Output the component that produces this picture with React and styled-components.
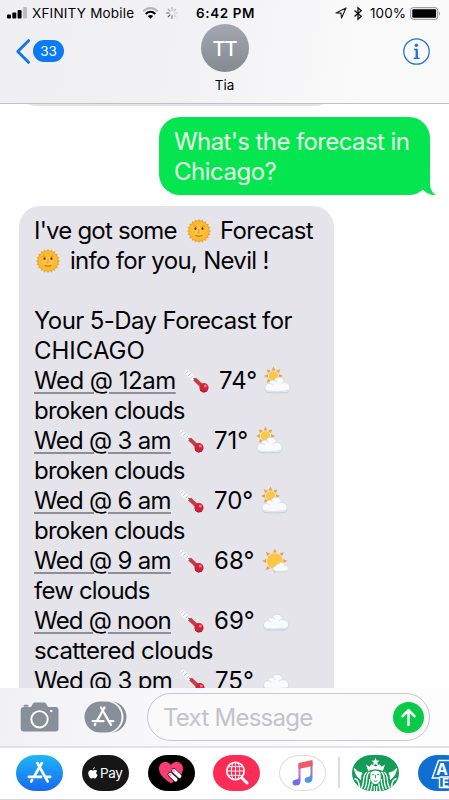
import React from "react";
import styled, { createGlobalStyle } from "styled-components";

const GlobalStyle = createGlobalStyle`
  * { box-sizing: border-box; }
  html, body { margin: 0; padding: 0; overflow: hidden; background: #fff; }
  svg { display: block; flex: none; overflow: visible; }
`;

const Phone = styled.main`
  width: 449px;
  height: 800px;
  display: flex;
  flex-direction: column;
  overflow: hidden;
  background: #fff;
  color: #050507;
  font-family: Inter, "Liberation Sans", sans-serif;
`;

const TopArea = styled.header`
  height: 104px;
  flex: none;
  background: linear-gradient(100deg, #efeff2 0%, #f2f2f5 45%, #f9f9fa 75%, #fafafa 100%);
  border-bottom: 1px solid #c0c0c6;
`;

const StatusBar = styled.div`
  height: 24px;
  display: flex;
  align-items: center;
  padding: 2px 7px 0 7px;
`;

const StatusText = styled.span`
  width: ${(p) => p.$w}px;
  margin-left: ${(p) => p.$ml}px;
  flex: none;
  font-size: 13.5px;
  line-height: 16px;
  white-space: nowrap;
  font-weight: ${(p) => (p.$bold ? 600 : 400)};
  letter-spacing: ${(p) => p.$ls || 0}px;
`;

const StatusIcon = styled.span`
  flex: none;
  margin-left: ${(p) => p.$ml}px;
`;

const NavBar = styled.div`
  height: 79px;
  display: grid;
  grid-template-columns: 1fr 60px 1fr;
  padding: 0 19px 0 16px;
`;

const Back = styled.div`
  display: flex;
  align-items: center;
  gap: 3px;
  height: 54px;
`;

const Badge = styled.span`
  width: 31px;
  height: 22px;
  border-radius: 11px;
  background: #0a7bf5;
  color: #fff;
  font-size: 13.5px;
  line-height: 22px;
  text-align: center;
`;

const Contact = styled.div`
  display: flex;
  flex-direction: column;
  align-items: center;
  margin-left: 3px;
`;

const Avatar = styled.div`
  width: 48px;
  height: 48px;
  border-radius: 50%;
  background: linear-gradient(#a3a7b1, #858992);
  color: #fff;
  font-size: 20px;
  font-weight: 500;
  line-height: 50px;
  letter-spacing: -1px;
  text-align: center;
`;

const ContactName = styled.span`
  margin-top: 5px;
  font-size: 13.5px;
  line-height: 16px;
`;

const Info = styled.div`
  display: flex;
  justify-content: flex-end;
  padding-top: 14px;
`;

const Thread = styled.section`
  height: 584px;
  flex: none;
  overflow: hidden;
  display: flex;
  flex-direction: column;
`;

const EarlierBubble = styled.div`
  width: 315px;
  height: 36px;
  flex: none;
  margin: -34px 0 0 18px;
  border-radius: 20px;
  background: #e4e3ea;
`;

const SentBubble = styled.div`
  position: relative;
  align-self: flex-end;
  flex: none;
  width: 271px;
  height: 78px;
  margin: 11px 19px 11px 0;
  padding: 10px 0 0 15px;
  border-radius: 21px;
  background: #04e54f;
  color: #e9ffe9;
`;

const Tail = styled.svg`
  position: absolute;
  right: -6px;
  bottom: 0;
`;

const ReceivedBubble = styled.div`
  flex: none;
  width: 315px;
  height: 600px;
  margin-left: 19px;
  padding: 10px 0 0 15px;
  border-radius: 21px;
  background: #e5e4eb;
`;

const Line = styled.div`
  height: 30px;
  display: flex;
  align-items: center;
  font-size: 24px;
  line-height: 30px;
  white-space: pre;
`;

const Words = styled.span`
  flex: none;
  width: ${(p) => (p.$w ? p.$w + "px" : "auto")};
  letter-spacing: ${(p) => p.$ls || 0}px;
`;

const TimeLink = styled(Words)`
  text-decoration: underline;
  text-decoration-color: #8f8e96;
  text-decoration-thickness: 1.5px;
  text-underline-offset: 3px;
`;

const Emoji = styled.span`
  flex: none;
  margin: -1px ${(p) => p.$mr || 0}px 0 ${(p) => p.$ml || 0}px;
`;

const Composer = styled.section`
  height: 60px;
  flex: none;
  display: flex;
  align-items: center;
  padding: 0 19px 0 20px;
  background: linear-gradient(100deg, #f1f1f4 0%, #f8f8fa 35%, #fdfdfd 100%);
  border-bottom: 2px solid #e2e2e6;
`;

const ComposerIcon = styled.span`
  width: ${(p) => p.$w}px;
  margin-right: ${(p) => p.$mr}px;
`;

const InputField = styled.div`
  width: 283px;
  height: 48px;
  display: flex;
  align-items: center;
  justify-content: space-between;
  padding: 1px 5px 0 15px;
  border: 1.5px solid #c8c8cd;
  border-radius: 24px;
  background: #fafafb;
  color: #c3c3c8;
  font-size: 24px;
`;

const SendButton = styled.span`
  width: 31px;
  height: 31px;
  border-radius: 50%;
  background: #09cb48;
`;

const AppDrawer = styled.nav`
  height: 52px;
  flex: none;
  display: flex;
  align-items: center;
  gap: 18.8px;
  padding: 0 0 2px 16px;
  border-bottom: 1px solid #d5d5d9;
  background: #fff;
`;

const AppPill = styled.span`
  width: 47px;
  height: 36px;
  flex: none;
  display: flex;
  align-items: center;
  justify-content: center;
  overflow: hidden;
  border-radius: 20px / 18px;
  background: ${(p) => p.$bg};
  border: ${(p) => (p.$outlined ? "1px solid #dedee2" : "0")};
  color: #fff;
`;

const PayText = styled.span`
  margin-left: 2px;
  font-size: 13.5px;
  line-height: 16px;
  letter-spacing: -0.3px;
`;

const Divider = styled.span`
  width: 2px;
  height: 31px;
  flex: none;
  margin: 0 -7px 0 -7px;
  background: #dcdce0;
`;

const SunFace = () => (
  <svg width="26" height="26" viewBox="0 0 26 26">
    <defs>
      <radialGradient id="face">
        <stop offset="0" stopColor="#ffc94c" />
        <stop offset="1" stopColor="#f9b52c" />
      </radialGradient>
    </defs>
    {Array.from({ length: 20 }, (_, i) => (
      <path key={i} d="M11.4 3.5 L13 .7 L14.6 3.5Z" fill="#efa92b" transform={`rotate(${i * 18} 13 13)`} />
    ))}
    <circle cx="13" cy="13" r="10.3" fill="url(#face)" stroke="#eda226" strokeWidth=".7" />
    <ellipse cx="9.5" cy="10.7" rx="1.1" ry="1.4" fill="#65410f" />
    <ellipse cx="16.5" cy="10.7" rx="1.1" ry="1.4" fill="#65410f" />
    <path d="M7.5 8.5q2-1.2 3.2 0M15.3 8.5q2-1.2 3.2 0M13 11v3.8h-1.3" fill="none" stroke="#d38a20" strokeWidth=".8" />
    <path d="M9.5 17.500q3.500 1.500 7 0" fill="none" stroke="#b96d1b" strokeWidth="1.100" />
  </svg>
);

const Thermometer = () => (
  <svg width="26" height="26" viewBox="0 0 26 26">
    <path d="M3 4.500 L14 14.500" stroke="#fafafa" strokeWidth="4.600" strokeLinecap="round" />
    <path d="M1.500 5.700l2.600-2.700M4 8l2.600-2.700M6.500 10.300l2.600-2.700" stroke="#a9bdc5" strokeWidth=".9" />
    <path d="M10.500 11 L19 19" stroke="#d43945" strokeWidth="4" />
    <path d="M9.500 10 L17 16.800" stroke="#a64750" strokeWidth="1.200" />
    <circle cx="20" cy="19.700" r="4.600" fill="#cf2338" />
    <circle cx="21.300" cy="18" r="1.500" fill="#ee7782" />
    <path d="M16 22q3 3.600 6.800 1.300" fill="none" stroke="#9c1c2c" strokeWidth="1" />
  </svg>
);

const cloudPath =
  "M6.5 22.3 C2.8 22.3 1 20.2 1 17.7 C1 15.3 2.9 13.6 5 13.5 C5.4 10.9 7.7 9.7 9.9 10.3 C11 7.9 13 7 15.3 7.2 C18.5 7.5 20.3 9.8 20.4 12.5 C23.9 12.3 26 14.5 26 17.4 C26 20.4 24 22.3 20.8 22.3Z";

const CloudShape = ({ transform }) => (
  <g transform={transform}>
    <path d={cloudPath} fill="#c3cad6" transform="translate(0 1)" />
    <path d={cloudPath} fill="#f8fafb" stroke="#ccd2db" strokeWidth=".6" />
    <path d="M5 13.5q3-.2 4 2M9.9 10.3q2.2.4 2.8 2.2M20.4 12.5q-2.5-.3-3.7 1.3" fill="none" stroke="#d3d9e0" strokeWidth=".8" />
    <path d="M3 20.5q3 1.2 10 1.1t11-1.2" fill="none" stroke="#dfe4ea" strokeWidth="1.2" />
  </g>
);

const SunRays = ({ cx, cy, r }) => (
  <g>
    {Array.from({ length: 8 }, (_, i) => (
      <path
        key={i}
        d={`M${cx - 2} ${cy - r - 0.8} L${cx} ${cy - r - 4.8} L${cx + 2} ${cy - r - 0.8}Z`}
        fill="#e6a83c"
        transform={`rotate(${i * 45} ${cx} ${cy})`}
      />
    ))}
    <circle cx={cx} cy={cy} r={r} fill="#fbc641" />
  </g>
);

const Weather = ({ kind }) => (
  <svg width="27" height="26" viewBox="0 0 27 26">
    {kind === "broken" && <SunRays cx={9.5} cy={8} r={4.7} />}
    {kind === "few" && <SunRays cx={12.8} cy={13} r={7.8} />}
    {kind === "few" ? (
      <CloudShape transform="translate(10.5 10.2) scale(.6)" />
    ) : (
      <CloudShape transform={kind === "cloud" ? "translate(.5 -.8)" : "translate(0 2)"} />
    )}
  </svg>
);

const AppStoreGlyph = ({ size, color, width = 2.6 }) => (
  <svg width={size} height={size} viewBox="0 0 24 24" fill="none" stroke={color} strokeWidth={width} strokeLinecap="round">
    <path d="M14.2 3 L7.2 15.3 M4.8 19.3 L4.1 20.6 M10 3 L19.8 20.6 M1.8 16.2 H13.5 M18 16.2 H22.2" />
  </svg>
);

const forecast = [
  { time: "Wed @ 12am", w: 142, ls: -0.5, temp: "74°", tempW: 37, kind: "broken", note: "broken clouds", noteLs: -0.77 },
  { time: "Wed @ 3 am", w: 137, ls: -0.7, temp: "71°", tempW: 34, kind: "broken", note: "broken clouds", noteLs: -0.77 },
  { time: "Wed @ 6 am", w: 137, ls: -0.7, temp: "70°", tempW: 39, kind: "broken", note: "broken clouds", noteLs: -0.77 },
  { time: "Wed @ 9 am", w: 137, ls: -0.7, temp: "68°", tempW: 40, kind: "few", note: "few clouds", noteLs: -0.8 },
  { time: "Wed @ noon", w: 137, ls: -0.8, temp: "69°", tempW: 40, kind: "cloud", note: "scattered clouds", noteLs: -0.6 },
  { time: "Wed @ 3 pm", w: 138, ls: -0.7, temp: "75°", tempW: 39, kind: "cloud", note: "" },
];

const Signal = () => (
  <svg width="20" height="12" viewBox="0 0 20 12">
    <rect x="0" y="7.5" width="4" height="4" rx="1" fill="#000" />
    <rect x="5.3" y="5.5" width="4" height="6" rx="1" fill="#000" />
    <rect x="10.6" y="3" width="4" height="8.5" rx="1" fill="#000" />
    <rect x="16" y="0" width="4" height="11.5" rx="1" fill="#bdbdc1" />
  </svg>
);

const Wifi = () => (
  <svg width="17" height="12" viewBox="0 0 17 12" fill="none">
    <path d="M1.2 4.2 Q8.5 -2.2 15.8 4.2" stroke="#b2b2b6" strokeWidth="2" />
    <path d="M3.7 6.9 Q8.5 2.7 13.3 6.9" stroke="#000" strokeWidth="2" />
    <path d="M5.8 9 Q8.5 6.8 11.2 9 L8.5 11.8Z" fill="#000" />
  </svg>
);

const Spinner = () => (
  <svg width="12" height="12" viewBox="0 0 12 12" strokeWidth="1.1" strokeLinecap="round">
    {["#aaa", "#bbb", "#ccc", "#ccc", "#777", "#555", "#666", "#999"].map((c, i) => (
      <path key={i} d="M6 .5V3.2" stroke={c} transform={`rotate(${i * 45} 6 6)`} />
    ))}
  </svg>
);

const Siren = () => (
  <svg width="47" height="36" viewBox="0 0 47 36" fill="none" stroke="#fff">
    <path d="M23.500 2.800l1.100 2.700 2.900.2-2.200 1.900.7 2.800-2.500-1.500-2.500 1.500.7-2.800-2.200-1.900 2.900-.2Z" fill="#fff" stroke="none" />
    <path d="M14 9.500l3.300 2.300 2.300-2.600 3.900 2.200 3.900-2.200 2.300 2.600L33 9.500l-2.200 6.500q-7.300-3.400-14.600 0Z" fill="#fff" stroke="none" />
    <path d="M18.500 17.500Q23.500 13.500 28.500 17.500L28.800 23Q27.500 29 23.500 29T18.200 23Z" fill="#fff" stroke="none" />
    <path d="M17.500 17C12.500 21 17 26 12.500 34M15 17C9.500 21 13.500 26 9.500 33M29.500 17C34.500 21 30 26 34.500 34M32 17C37.500 21 33.500 26 37.500 33M17.800 24C18 28 16.500 31 15.500 35M29.200 24C29 28 30.500 31 31.500 35M20 28.500C20.500 31 19 33 18.700 36M27 28.500C26.500 31 28 33 28.300 36M22.300 31V36M24.700 31V36" strokeWidth="1.300" />
    <path d="M2.500 13.500q3 4 7.500 4.500-2 2.500-1.300 6.500-5.400-4-6.200-11M44.500 13.500q-3 4-7.500 4.500 2 2.500 1.300 6.500 5.400-4 6.200-11" fill="#fff" strokeWidth="1" />
    <path d="M2.500 23.500q4.500 1 5 8.500M44.500 23.500q-4.500 1-5 8.500" strokeWidth="1.500" />
    <path d="M20 19.700h2.300M24.800 19.700h2.300M23.500 20v3.300M21.700 25.700q1.800 1.200 3.600 0" stroke="#159d58" strokeWidth=".9" />
  </svg>
);

const StackedLetters = styled.text`
  font-family: Inter, "Liberation Sans", sans-serif;
  font-size: ${(p) => p.$size}px;
  font-weight: 700;
`;

export default function App() {
  return (
    <Phone>
      <GlobalStyle />
      <TopArea>
        <StatusBar>
          <Signal />
          <StatusText $w={103} $ml={5} $ls={0.2}>XFINITY Mobile</StatusText>
          <StatusIcon $ml={7}><Wifi /></StatusIcon>
          <StatusIcon $ml={7}><Spinner /></StatusIcon>
          <StatusText $w={60} $ml={18} $ls={0.6} $bold>6:42 PM</StatusText>
          <StatusIcon $ml={79}>
            <svg width="12" height="12" viewBox="0 0 12 12" fill="none" stroke="#222" strokeWidth="1.2" strokeLinejoin="round">
              <path d="M1 6 L11 1 L6.500 11 L6 6.200Z" />
            </svg>
          </StatusIcon>
          <StatusIcon $ml={7}>
            <svg width="8" height="13" viewBox="0 0 8 13" fill="none" stroke="#111" strokeWidth="1.3">
              <path d="M.5 3.500 L7.200 9.300 L4 12.300 V.7 L7.200 3.700 L.5 9.500" />
            </svg>
          </StatusIcon>
          <StatusText $w={37} $ml={8} $ls={0.1}>100%</StatusText>
          <StatusIcon $ml={3}>
            <svg width="31" height="13" viewBox="0 0 31 13">
              <rect x=".7" y=".7" width="27" height="11.600" rx="2.500" fill="none" stroke="#8b8b8e" strokeWidth="1" />
              <rect x="2.300" y="2.300" width="23.800" height="8.400" rx="1" fill="#000" />
              <path d="M29 4.500q2 2 0 4Z" fill="#8b8b8e" />
            </svg>
          </StatusIcon>
        </StatusBar>
        <NavBar>
          <Back>
            <svg width="14" height="25" viewBox="0 0 14 25" fill="none" stroke="#1577e6" strokeWidth="3" strokeLinecap="round" strokeLinejoin="round">
              <path d="M12.500 1.700 L1.800 12.500 L12.500 23.300" />
            </svg>
            <Badge>33</Badge>
          </Back>
          <Contact>
            <Avatar>TT</Avatar>
            <ContactName>Tia</ContactName>
          </Contact>
          <Info>
            <svg width="27" height="27" viewBox="0 0 27 27">
              <circle cx="13.500" cy="13.500" r="12.700" fill="none" stroke="#2273dc" strokeWidth="1.300" />
              <circle cx="13.400" cy="7.300" r="1.700" fill="#2273dc" />
              <path d="M11 11.400h3.100v8.600M10.700 20.300h5.800" fill="none" stroke="#2273dc" strokeWidth="1.500" />
              <path d="M13.600 11.400v8.800" stroke="#2273dc" strokeWidth="2.100" />
            </svg>
          </Info>
        </NavBar>
      </TopArea>

      <Thread>
        <EarlierBubble />
        <SentBubble>
          <Line><Words $ls={-0.6}>What's the forecast in</Words></Line>
          <Line><Words $ls={-0.5}>Chicago?</Words></Line>
          <Tail width="20" height="20" viewBox="0 0 20 20">
            <path d="M14 0V9C14 14 16.500 18 20 19.800C15.500 20.300 11.500 18.800 8.500 16L0 10Z" fill="#04e54f" />
          </Tail>
        </SentBubble>
        <ReceivedBubble>
          <Line>
            <Words $w={142} $ls={-0.8}>I've got some</Words>
            <Emoji $ml={10} $mr={8}><SunFace /></Emoji>
            <Words $ls={-0.65}>Forecast</Words>
          </Line>
          <Line>
            <Emoji $ml={1} $mr={9}><SunFace /></Emoji>
            <Words $ls={-0.7}>info for you, Nevil !</Words>
          </Line>
          <Line />
          <Line><Words $ls={-0.6}>Your 5-Day Forecast for</Words></Line>
          <Line><Words>CHICAGO</Words></Line>
          {forecast.map((f) => (
            <React.Fragment key={f.time}>
              <Line>
                <TimeLink $w={f.w} $ls={f.ls}>{f.time}</TimeLink>
                <Emoji $ml={8} $mr={9}><Thermometer /></Emoji>
                <Words $w={f.tempW}>{f.temp}</Words>
                <Emoji $ml={8}><Weather kind={f.kind} /></Emoji>
              </Line>
              {f.note && <Line><Words $ls={f.noteLs}>{f.note}</Words></Line>}
            </React.Fragment>
          ))}
        </ReceivedBubble>
      </Thread>

      <Composer>
        <ComposerIcon $w={39} $mr={25}>
          <svg width="39" height="30" viewBox="0 0 39 30">
            <path d="M4 5H11L13 1.500Q13.800.5 15 .5H24Q25.300.5 26 1.500L28 5H35.500Q38.500 5 38.500 8V26.500Q38.500 29.500 35.500 29.500H3.700Q.7 29.500.7 26.500V8Q.7 5 4 5Z" fill="#878f99" />
            <rect x="3.500" y="2.700" width="5" height="2" rx="1" fill="#878f99" />
            <circle cx="19.500" cy="17.300" r="8.200" fill="none" stroke="#fff" strokeWidth="1.900" />
            <circle cx="31.200" cy="9" r="1.200" fill="#fff" />
          </svg>
        </ComposerIcon>
        <ComposerIcon $w={43} $mr={20}>
          <svg width="43" height="32" viewBox="0 0 43 32">
            <rect x="6" y=".5" width="36.500" height="31" rx="15.500" fill="#878f99" />
            <rect x="0" y="-.5" width="39.500" height="33" rx="16.500" fill="#fafafc" />
            <rect x=".5" y=".5" width="37" height="31" rx="15.500" fill="#878f99" />
            <g fill="none" stroke="#fff" strokeWidth="2.300" strokeLinecap="round">
              <path d="M20.500 6.500L13.500 19M11.300 23L10.800 24M17 6.500L27 24M8.800 20.200H19.500M24.700 20.200H29.300" />
            </g>
          </svg>
        </ComposerIcon>
        <InputField>
          <Words $ls={-0.75}>Text Message</Words>
          <SendButton>
            <svg width="31" height="31" viewBox="0 0 31 31" fill="none" stroke="#fff" strokeWidth="2.500" strokeLinecap="round" strokeLinejoin="round">
              <path d="M15.500 23V8.500M9.500 14.200L15.500 8.200L21.500 14.200" />
            </svg>
          </SendButton>
        </InputField>
      </Composer>

      <AppDrawer>
        <AppPill $bg="linear-gradient(#1fb6f8, #1769ee)"><AppStoreGlyph size={25} color="#fff" /></AppPill>
        <AppPill $bg="#161616">
          <svg width="10" height="12" viewBox="0 0 10 12" fill="#fff">
            <path d="M6.900 0Q7 1.800 5 2.700Q4.900.8 6.900 0ZM5 3.400Q8 2.200 9.300 4Q6.800 6 9.600 8Q8.300 11.700 6.500 11.400Q5 10.800 3.700 11.400Q1.800 11.800.6 8.300Q-.6 4.500 2 3.200Q3.400 2.700 5 3.400Z" />
          </svg>
          <PayText>Pay</PayText>
        </AppPill>
        <AppPill $bg="#000">
          <svg width="26" height="24" viewBox="0 0 26 24">
            <path d="M13 22.500C9 19.500 1 14.500 1 7.700C1 .5 9.500-1 13 4C16.500-1 25 .5 25 7.700C25 14.500 17 19.500 13 22.500Z" fill="#fa3d75" />
            <path d="M12.200 13.500l5.500 5.200M15.800 9.700l5.800 5.500" stroke="#1b0710" strokeWidth="5" strokeLinecap="round" />
            <path d="M12.200 13.500l5.500 5.200M15.800 9.700l5.800 5.500" stroke="#fff" strokeWidth="3.700" strokeLinecap="round" />
            <path d="M11 12.600l2 1.900M14.700 8.800l2 1.900" stroke="#fa9cb9" strokeWidth="2" />
          </svg>
        </AppPill>
        <AppPill $bg="#fb2d55">
          <svg width="24" height="24" viewBox="0 0 24 24" fill="none" stroke="#fff">
            <circle cx="10.500" cy="10" r="8.700" strokeWidth="1.700" />
            <path d="M16.800 16.800L22 22" strokeWidth="3" strokeLinecap="round" />
            <path d="M2 10h17M3.500 5.700h14M3.500 14.300h14M10.500 1.500v17M8 2Q4.500 10 8 18M13 2Q16.500 10 13 18" strokeWidth=".9" />
          </svg>
        </AppPill>
        <AppPill $bg="#fff" $outlined>
          <svg width="22" height="26" viewBox="0 0 22 26">
            <defs>
              <linearGradient id="note" x1="0" y1="0" x2="0" y2="1">
                <stop offset="0" stopColor="#f6536f" />
                <stop offset=".45" stopColor="#cb70d7" />
                <stop offset=".75" stopColor="#776cf0" />
                <stop offset="1" stopColor="#736bf3" />
              </linearGradient>
              <linearGradient id="noteRight" x1="0" y1="0" x2="0" y2="1">
                <stop offset="0" stopColor="#f45168" />
                <stop offset=".5" stopColor="#8f78d1" />
                <stop offset="1" stopColor="#35a3e8" />
              </linearGradient>
            </defs>
            <path d="M6.500 3L20.500 0V6L6.500 9Z" fill="#f05868" />
            <path d="M6.500 4H8.500V21Q8.500 25.500 4 25.500Q.5 25.500.5 22.700Q.5 20.200 4 19.600Q6.500 19.300 6.500 17.500Z" fill="url(#note)" />
            <path d="M18.500 2H20.500V18Q20.500 22.700 16 22.700Q12.700 22.700 12.700 19.900Q12.700 17.300 16 16.900Q18.500 16.600 18.500 14.500Z" fill="url(#noteRight)" />
          </svg>
        </AppPill>
        <Divider />
        <AppPill $bg="#159d58"><Siren /></AppPill>
        <AppPill $bg="#0e6fd1">
          <svg width="47" height="36" viewBox="0 0 47 36">
            <path d="M34 5.500H20.500L14.300 23H21.500V32.500H34M21.500 22H34" fill="none" stroke="#fff" strokeWidth="1.500" />
            <StackedLetters $size={16} x="18" y="19.500" fill="#fff">A</StackedLetters>
            <StackedLetters $size={11.5} x="24" y="31.500" fill="#fff">E</StackedLetters>
          </svg>
        </AppPill>
      </AppDrawer>
    </Phone>
  );
}
